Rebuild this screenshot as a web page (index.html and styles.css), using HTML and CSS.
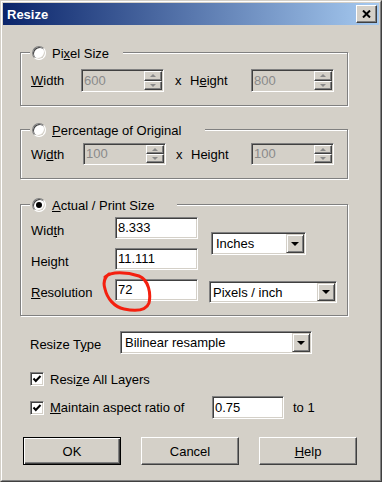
FILE: index.html
```html
<!DOCTYPE html>
<html lang="en">
<head>
<meta charset="utf-8">
<title>Resize</title>
<link rel="stylesheet" href="styles.css">
</head>
<body>
<div class="window">
  <div class="frame">
    <div class="titlebar">
      <span class="title">Resize</span>
      <button class="close" type="button" aria-label="Close">
        <svg width="9" height="8" viewBox="0 0 9 8"><path d="M1 0.5 L8 7.5 M8 0.5 L1 7.5" stroke="#000" stroke-width="2" fill="none"/></svg>
      </button>
    </div>
    <div class="client">
      <div class="group g1">
        <div class="legend lg1"><span class="radio"></span><span>Pi<u>x</u>el Size</span></div>
        <div class="row">
          <span class="lbl"><u>W</u>idth</span>
          <div class="edit disabled"><span class="val">600</span><span class="spin"><span class="sb"><i class="up"></i></span><span class="sb"><i class="dn"></i></span></span></div>
          <div class="mid"><span class="x">x</span><span>H<u>e</u>ight</span></div>
          <div class="edit disabled"><span class="val">800</span><span class="spin"><span class="sb"><i class="up"></i></span><span class="sb"><i class="dn"></i></span></span></div>
        </div>
      </div>

      <div class="group g2">
        <div class="legend lg2"><span class="radio"></span><span><u>P</u>ercentage of Original</span></div>
        <div class="row">
          <span class="lbl">Wi<u>d</u>th</span>
          <div class="edit disabled"><span class="val">100</span><span class="spin"><span class="sb"><i class="up"></i></span><span class="sb"><i class="dn"></i></span></span></div>
          <div class="mid"><span class="x">x</span><span>Hei<u>g</u>ht</span></div>
          <div class="edit disabled"><span class="val">100</span><span class="spin"><span class="sb"><i class="up"></i></span><span class="sb"><i class="dn"></i></span></span></div>
        </div>
      </div>

      <div class="group g3">
        <div class="legend lg3"><span class="radio on"></span><span><u>A</u>ctual / Print Size</span></div>
        <div class="grid3">
          <span class="lbl3 r1">Wid<u>t</u>h</span>
          <div class="edit e3 r1"><span class="val">8.333</span></div>
          <div class="select sel-inches"><span class="stext">Inches</span><span class="dbtn"><i class="tri"></i></span></div>
          <span class="lbl3 r2">Hei<u>g</u>ht</span>
          <div class="edit e3 r2"><span class="val">11.111</span></div>
          <span class="lbl3 r3"><u>R</u>esolution</span>
          <div class="resfield r3">
            <div class="edit e3"><span class="val">72</span></div>
            <svg class="mark" width="60" height="46" viewBox="0 0 60 46"><path d="M7 9 C13 3, 29 4, 41 8 C51 12, 53 26, 51 35 C48 43, 36 43, 26 41 C16 39, 9 30, 7 21 C5 15, 6 10, 11 6" stroke="#f4200f" stroke-width="3" fill="none" stroke-linecap="round"/></svg>
          </div>
          <div class="select sel-pix r3"><span class="stext">Pixels / inch</span><span class="dbtn"><i class="tri"></i></span></div>
        </div>
      </div>

      <div class="opts">
        <div class="typerow">
          <span class="typelbl">Resize T<u>y</u>pe</span>
          <div class="select sel-type"><span class="stext">Bilinear resample</span><span class="dbtn"><i class="tri"></i></span></div>
        </div>
        <div class="chkrow c1">
          <span class="check"><svg width="12" height="12" viewBox="0 0 12 12"><path d="M2.5 5.5 L4.8 8 L9.5 3" stroke="#000" stroke-width="2" fill="none"/></svg></span>
          <span class="clbl">Resi<u>z</u>e All Layers</span>
        </div>
        <div class="chkrow c2">
          <span class="check"><svg width="12" height="12" viewBox="0 0 12 12"><path d="M2.5 5.5 L4.8 8 L9.5 3" stroke="#000" stroke-width="2" fill="none"/></svg></span>
          <span class="clbl wide"><u>M</u>aintain aspect ratio of</span>
          <div class="edit ratio"><span class="val">0.75</span></div>
          <span class="to1">to 1</span>
        </div>
      </div>

      <div class="buttons">
        <button class="btn default" type="button">OK</button>
        <button class="btn" type="button">Cancel</button>
        <button class="btn" type="button"><u>H</u>elp</button>
      </div>
    </div>
  </div>
</div>
</body>
</html>
```

FILE: styles.css
```css
* { box-sizing: border-box; }

html, body {
  margin: 0;
  padding: 0;
  background: #d4d0c8;
}

body {
  font-family: "Liberation Sans", Arial, sans-serif;
  font-size: 13px;
  color: #000;
}

u { text-underline-offset: 1px; }

.window {
  width: 382px;
  height: 482px;
  border: 1px solid;
  border-color: #d4d0c8 #404040 #404040 #d4d0c8;
}

.frame {
  height: 100%;
  border: 1px solid;
  border-color: #fff #808080 #808080 #fff;
  padding: 1px;
  display: flex;
  flex-direction: column;
}

.titlebar {
  flex: none;
  height: 22px;
  display: flex;
  align-items: center;
  justify-content: space-between;
  padding: 0 2px 0 4px;
  background: linear-gradient(to right, #0a246a, #a6caf0);
}

.title {
  color: #fff;
  font-weight: bold;
  font-size: 13px;
}

.close,
.btn {
  font: inherit;
  color: #000;
  margin: 0;
  padding: 0;
  background: #d4d0c8;
  border: 1px solid;
  border-color: #fff #404040 #404040 #fff;
  box-shadow: inset -1px -1px 0 #808080, inset 1px 1px 0 #d4d0c8;
}

.close {
  width: 21px;
  height: 18px;
  display: flex;
  align-items: center;
  justify-content: center;
}

.client {
  flex: 1;
  display: flex;
  flex-direction: column;
  padding-left: 17px;
}

/* group boxes */
.group {
  width: 328px;
  border: 1px solid #808080;
  box-shadow: inset 1px 1px 0 #fff, 1px 1px 0 #fff;
}

.g1 { margin-top: 27px; padding-bottom: 13px; }
.g2 { margin-top: 23px; padding-bottom: 13px; }
.g3 { margin-top: 25px; padding-bottom: 14px; }

.legend {
  height: 18px;
  margin: -9px 0 0 9px;
  padding-left: 2px;
  display: flex;
  align-items: center;
  gap: 6px;
  background: #d4d0c8;
}

.lg1 { width: 93px; }
.lg2 { width: 175px; }
.lg3 { width: 147px; }

.radio {
  position: relative;
  width: 14px;
  height: 14px;
  flex: none;
  border-radius: 50%;
  border: 1px solid;
  border-color: #808080 #fff #fff #808080;
  box-shadow: inset 1px 1px 0 #404040, inset -1px -1px 0 #d4d0c8;
  background: #fff;
}

.radio.on::after {
  content: "";
  position: absolute;
  left: 3px;
  top: 3px;
  width: 6px;
  height: 6px;
  border-radius: 50%;
  background: #000;
}

.row {
  display: flex;
  align-items: center;
  padding-left: 10px;
}

.g1 .row { margin-top: 7px; }
.g2 .row { margin-top: 4px; }

.g1 .lbl { width: 50px; }
.g2 .lbl { width: 52px; }

.mid {
  display: flex;
  align-items: center;
}

.g1 .mid { width: 87px; padding-left: 11px; }
.g2 .mid { width: 85px; padding-left: 10px; }

.x { width: 15px; }

/* edit fields */
.edit {
  display: flex;
  align-items: center;
  border: 1px solid;
  border-color: #808080 #fff #fff #808080;
  box-shadow: inset 1px 1px 0 #404040, inset -1px -1px 0 #d4d0c8;
  background: #fff;
  padding: 1px;
  width: 83px;
  height: 22px;
}

.g1 .edit { height: 23px; }

.edit.disabled {
  background: #d4d0c8;
  color: #8a8a8a;
}

.val {
  flex: 1;
  padding-left: 1px;
  line-height: 16px;
  white-space: nowrap;
}

.spin {
  width: 18px;
  align-self: stretch;
  display: flex;
  flex-direction: column;
}

.sb {
  flex: 1;
  display: flex;
  align-items: center;
  justify-content: center;
  background: #d4d0c8;
  border: 1px solid;
  border-color: #fff #404040 #404040 #fff;
  box-shadow: inset -1px -1px 0 #808080;
}

.up,
.dn {
  width: 0;
  height: 0;
  border-left: 3px solid transparent;
  border-right: 3px solid transparent;
}

.up { border-bottom: 3px solid #8a8a8a; }
.dn { border-top: 3px solid #8a8a8a; }

/* group 3 grid */
.grid3 {
  display: grid;
  grid-template-columns: 84px 83px auto;
  grid-template-rows: 22px 22px 22px;
  row-gap: 9px;
  margin-top: 3px;
  padding-left: 10px;
}

.r1 { grid-row: 1; }
.r2 { grid-row: 2; }
.r3 { grid-row: 3; }

.lbl3 {
  grid-column: 1;
  padding-top: 6px;
  line-height: 16px;
}

.e3 { grid-column: 2; }

.resfield {
  grid-column: 2;
  position: relative;
}

.mark {
  position: absolute;
  left: -17px;
  top: -11px;
  pointer-events: none;
}

/* selects */
.select {
  display: flex;
  align-items: stretch;
  border: 1px solid;
  border-color: #808080 #fff #fff #808080;
  box-shadow: inset 1px 1px 0 #404040, inset -1px -1px 0 #d4d0c8;
  background: #fff;
  padding: 1px;
  height: 23px;
}

.stext {
  flex: 1;
  display: flex;
  align-items: center;
  padding-left: 3px;
  white-space: nowrap;
}

.dbtn {
  width: 18px;
  display: flex;
  align-items: center;
  justify-content: center;
  background: #d4d0c8;
  border: 1px solid;
  border-color: #d4d0c8 #404040 #404040 #d4d0c8;
  box-shadow: inset 1px 1px 0 #fff, inset -1px -1px 0 #808080;
}

.tri {
  width: 0;
  height: 0;
  border-left: 4px solid transparent;
  border-right: 4px solid transparent;
  border-top: 4px solid #000;
}

.sel-inches {
  grid-column: 3;
  grid-row: 1 / 3;
  align-self: center;
  width: 95px;
  margin-left: 13px;
}

.sel-pix {
  grid-column: 3;
  align-self: start;
  width: 128px;
  height: 22px;
  margin-left: 11px;
  margin-top: 2px;
}

.sel-pix .stext { padding-left: 2px; }

/* lower options */
.opts {
  margin-top: 15px;
  padding-left: 10px;
  display: flex;
  flex-direction: column;
}

.typerow {
  display: flex;
  align-items: center;
}

.typelbl {
  width: 90px;
  padding-top: 4px;
}

.sel-type { width: 192px; }

.chkrow {
  display: flex;
  align-items: center;
}

.c1 { margin-top: 17px; height: 16px; }
.c2 { margin-top: 9px; height: 23px; }

.check {
  width: 14px;
  height: 14px;
  flex: none;
  display: flex;
  align-items: center;
  justify-content: center;
  border: 1px solid;
  border-color: #808080 #fff #fff #808080;
  box-shadow: inset 1px 1px 0 #404040, inset -1px -1px 0 #d4d0c8;
  background: #fff;
}

.clbl { margin-left: 6px; }
.clbl.wide { width: 162px; }

.edit.ratio {
  width: 72px;
  height: 23px;
}

.to1 { margin-left: 9px; }

/* buttons */
.buttons {
  margin-top: 18px;
  margin-left: 3px;
  display: flex;
  gap: 20px;
}

.btn {
  width: 98px;
  height: 28px;
}

.btn.default {
  border: 1px solid #000;
  box-shadow: inset 1px 1px 0 #fff, inset -1px -1px 0 #404040, inset -2px -2px 0 #808080;
}
```
